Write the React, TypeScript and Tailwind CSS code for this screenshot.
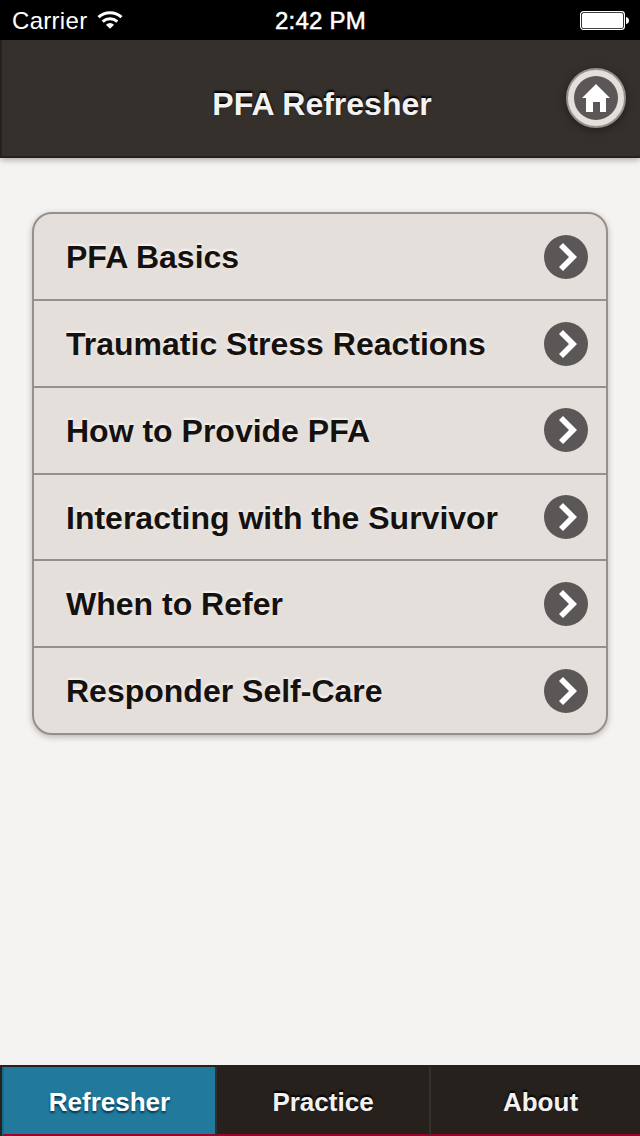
import React from 'react';
import clsx from 'clsx';

const LESSONS = [
  { title: 'PFA Basics', row: 'h-[87px]', icon: 'mt-[21px]' },
  { title: 'Traumatic Stress Reactions', row: 'h-[87px]', icon: 'mt-[21px]' },
  { title: 'How to Provide PFA', row: 'h-[87px]', icon: 'mt-5' },
  { title: 'Interacting with the Survivor', row: 'h-[86px]', icon: 'mt-5' },
  { title: 'When to Refer', row: 'h-[87px]', icon: 'mt-[21px]' },
  { title: 'Responder Self-Care', row: 'h-[85px]', icon: 'mt-[21px]' },
];

const StatusBar: React.FC = () => (
  <div className="grid h-10 grid-cols-3 items-center bg-black pl-3 pr-[11px] pt-0.5 text-2xl leading-[38px] text-white">
    <div className="flex items-center gap-2.5">
      <span className="tracking-[0.3px]">Carrier</span>
      <svg className="-mt-0.5" width="26" height="18" viewBox="0 0 26 18" fill="none" stroke="white" strokeWidth="3">
        <path d="M1.500 6.200C8 .1 18 .1 24.500 6.200" />
        <path d="M5.700 10.700C10 6.900 16 6.900 20.300 10.700" />
        <path d="M13 17.800L8.900 13.700Q13 10.300 17.100 13.700Z" fill="white" stroke="none" />
      </svg>
    </div>
    <span className="text-center tracking-[0.25px] [-webkit-text-stroke:0.5px_white]">2:42 PM</span>
    <svg className="justify-self-end" width="49" height="20" viewBox="0 0 49 20">
      <rect x=".6" y=".6" width="43.800" height="17.800" rx="2.800" fill="none" stroke="white" strokeWidth="1.2" />
      <rect x="2" y="2" width="41" height="15" rx="1.500" fill="white" />
      <path d="M46 6Q49 6.500 49 9.500T46 13Z" fill="white" />
    </svg>
  </div>
);

const Header: React.FC = () => (
  <header className="flex h-[118px] items-start border-b-2 border-l-2 border-[#26211d] bg-[#35302c] shadow-[0_2px_6px_rgba(0,0,0,0.3)]">
    <h1 className="flex-1 pl-[76px] pt-[45px] text-center text-[32px] font-bold leading-[38px] text-[#f2f2f2] [text-shadow:0_-2px_2px_#000]">
      PFA Refresher
    </h1>
    <button className="mr-3.5 mt-7 flex size-[60px] items-center justify-center rounded-full border-2 border-[#96908c] bg-[#e4dfdb] shadow-[0_2px_8px_rgba(0,0,0,0.4)]">
      <svg width="44" height="44" viewBox="0 0 44 44">
        <circle cx="22" cy="22" r="22" fill="#5b5756" />
        <path d="M22 8L36 22H32V36H26V26H19V36H12V22H8Z" fill="white" />
      </svg>
    </button>
  </header>
);

const ChevronBadge: React.FC<{ className: string }> = ({ className }) => (
  <svg className={clsx('shrink-0', className)} width="44" height="44" viewBox="0 0 44 44">
    <circle cx="22" cy="22" r="22" fill="#5b5756" />
    <path d="M15 12L19 8L33 22L19 36L15 32L25 22Z" fill="white" />
  </svg>
);

export default function App() {
  return (
    <div className="flex h-[1136px] w-[640px] flex-col overflow-hidden bg-[#f5f3f1] font-['Liberation_Sans',Helvetica,Arial,sans-serif]">
      <StatusBar />
      <Header />

      <main className="flex-1 px-8 pt-[54px]">
        <ul className="overflow-hidden rounded-[20px] border-2 border-[#96908c] bg-[#e4dfdb] shadow-[0_2px_6px_rgba(0,0,0,0.25)]">
          {LESSONS.map(({ title, row, icon }) => (
            <li
              key={title}
              className={clsx('flex items-start justify-between border-b-2 border-[#96908c] pl-8 pr-[18px] last:border-b-0', row)}
            >
              <span className="pt-6 text-[32px] font-bold leading-[38px] text-[#15110e] [text-shadow:0_-2px_2px_#f5f3f1]">
                {title}
              </span>
              <ChevronBadge className={icon} />
            </li>
          ))}
        </ul>
      </main>

      <nav className="flex h-[71px] border-l-2 border-t-2 border-[#26211d] bg-[#26211d] text-center text-[26px] font-bold leading-[70px] text-[#f2f2f2]">
        <div className="w-[215px] border-b-2 border-l-2 border-r-2 border-b-[#a00028] border-l-[#176b8a] border-r-[#35302c] bg-[#21799b] text-white [text-shadow:0_2px_2px_#003850]">
          Refresher
        </div>
        <div className="w-[214px] border-b-2 border-r-2 border-b-[#a00028] border-r-[#35302c] [text-shadow:0_-2px_2px_#000]">
          Practice
        </div>
        <div className="flex-1 border-b-2 border-[#a00028] pl-2.5 [text-shadow:0_-2px_2px_#000]">About</div>
      </nav>
    </div>
  );
}
